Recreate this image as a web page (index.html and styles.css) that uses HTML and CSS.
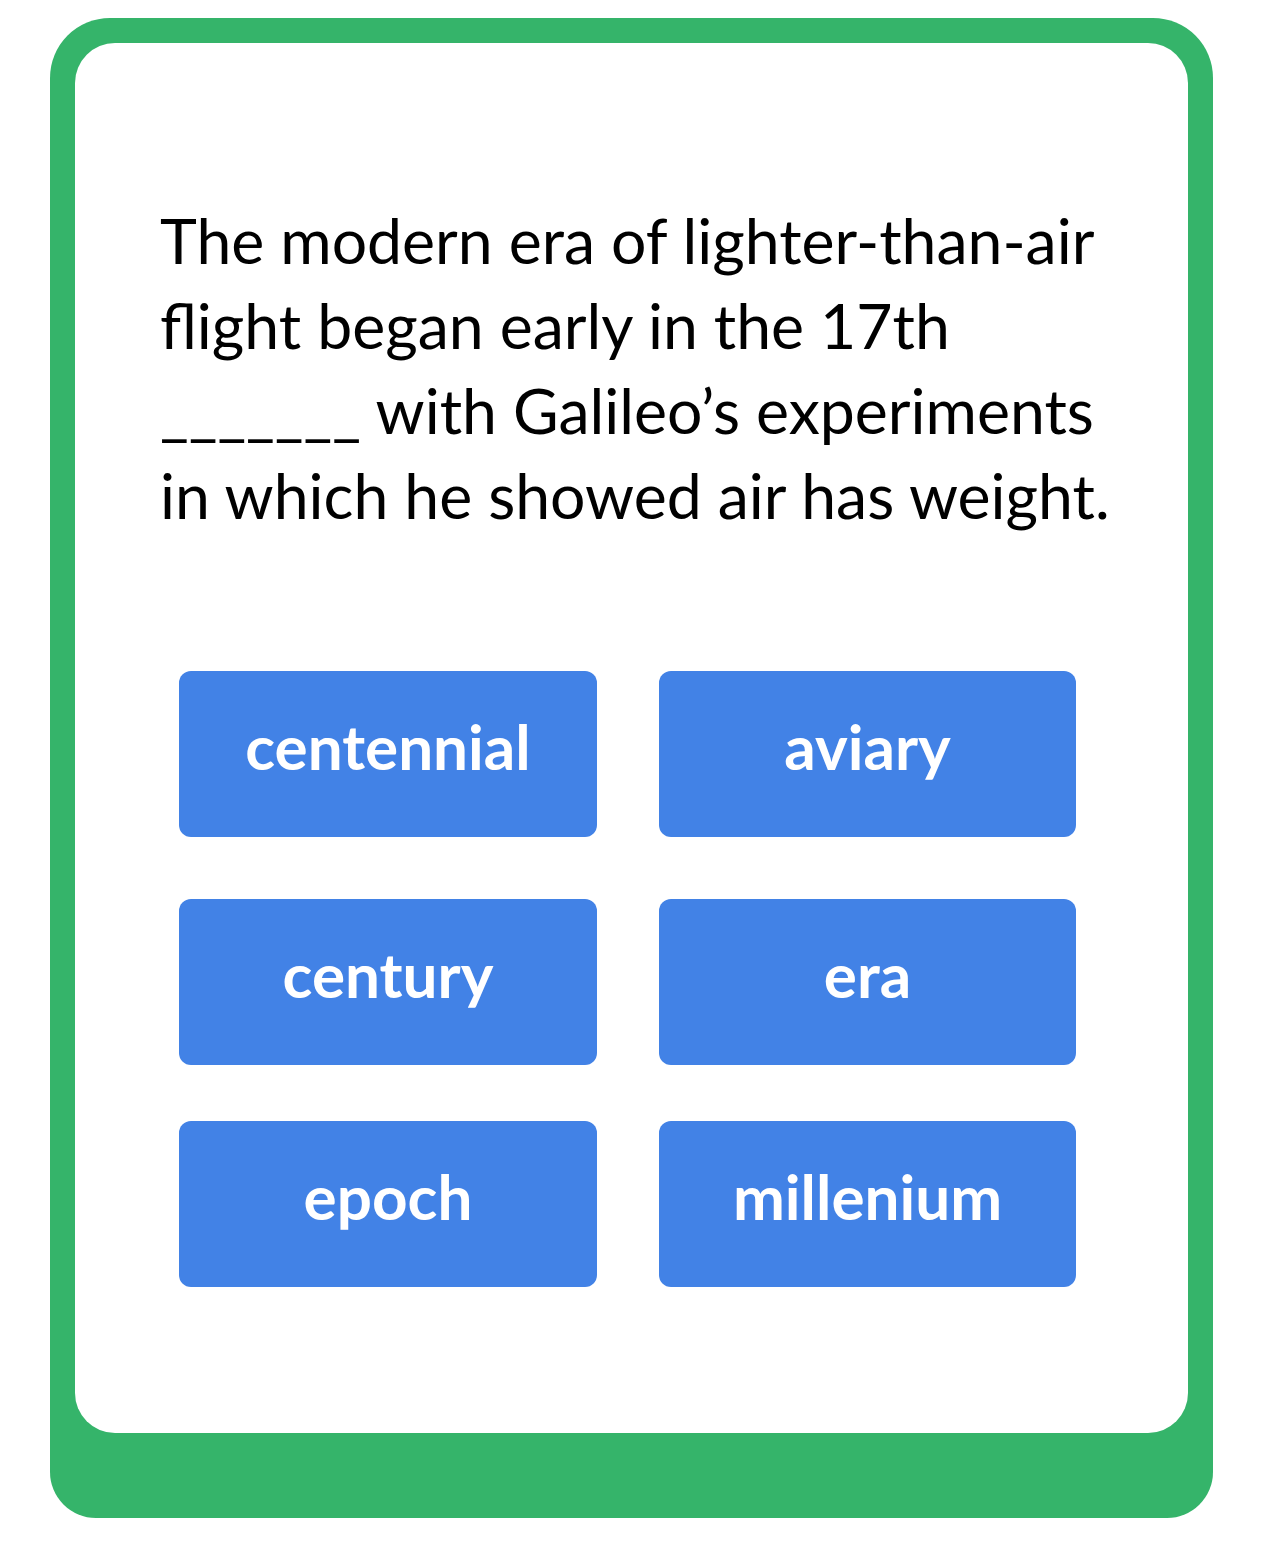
FILE: index.html
```html
<!DOCTYPE html>
<html lang="en">
<head>
<meta charset="utf-8">
<title>Quiz card</title>
<link rel="stylesheet" href="styles.css">
</head>
<body>
<div class="card">
  <div class="inner">
    <p class="question">The modern era of lighter-than-air<br>flight began early in the 17th<br>_______ with Galileo’s experiments<br>in which he showed air has weight.</p>
    <div class="choices">
      <div class="row">
        <button class="choice">centennial</button>
        <button class="choice">aviary</button>
      </div>
      <div class="row">
        <button class="choice">century</button>
        <button class="choice">era</button>
      </div>
      <div class="row row-last">
        <button class="choice">epoch</button>
        <button class="choice">millenium</button>
      </div>
    </div>
  </div>
</div>
</body>
</html>
```
FILE: styles.css
```css
html, body {
  margin: 0;
  padding: 0;
  background: #ffffff;
}
body {
  width: 1263px;
  height: 1550px;
  font-family: "Lato", "Liberation Sans", sans-serif;
}
.card {
  margin: 18px 50px 0 50px;
  background: #35b46a;
  border-radius: 60px 60px 46px 46px;
  padding: 25px 25px 85px 25px;
}
.inner {
  background: #ffffff;
  border-radius: 40px;
  height: 1390px;
  box-sizing: border-box;
  padding: 154px 0 0 85px;
}
.question {
  margin: 0;
  font-size: 62.5px;
  line-height: 85px;
  font-weight: 400;
  color: #000000;
  white-space: nowrap;
}
.choices {
  margin: 134px 0 0 19px;
  display: flex;
  flex-direction: column;
  gap: 62px;
}
.row {
  display: grid;
  grid-template-columns: 418px 417px;
  column-gap: 62px;
}
.row-last {
  margin-top: -6px;
}
.choice {
  height: 166px;
  border: none;
  border-radius: 12px;
  background: #4282e6;
  color: #ffffff;
  font-family: "Lato", "Liberation Sans", sans-serif;
  font-weight: 700;
  font-size: 62px;
  padding: 0 0 16px 0;
  display: flex;
  align-items: center;
  justify-content: center;
}
```
